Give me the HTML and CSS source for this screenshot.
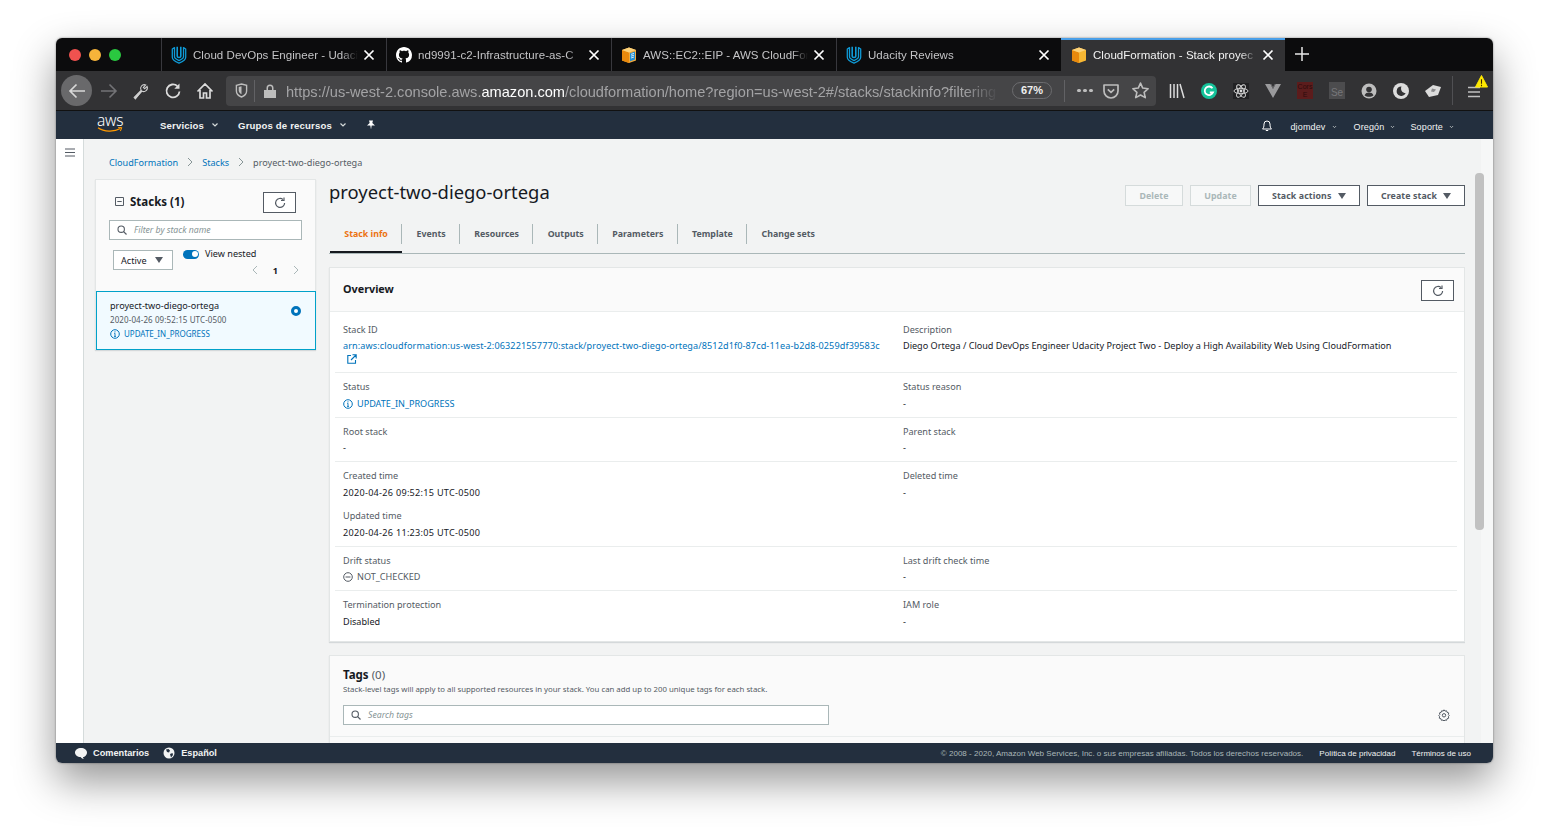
FILE: index.html
```html
<!DOCTYPE html>
<html lang="es">
<head>
<meta charset="utf-8">
<title>CloudFormation - Stack proyect-two-diego-ortega</title>
<link rel="stylesheet" href="styles.css">
</head>
<body>
<svg class="defs" aria-hidden="true">
  <symbol id="i-udacity" viewBox="0 0 16 18"><path d="M3.500 1.600 1.300 3v8.200c0 2.600 3.400 4.600 6.700 5.900 3.300-1.300 6.700-3.300 6.700-5.900V3l-2.200-1.400v9.200c0 1.600-2.400 2.900-4.500 3.800-2.100-.9-4.500-2.200-4.500-3.800z" fill="none" stroke="currentColor" stroke-width="1.300" stroke-linejoin="round"/><path d="M6.200.8v9.400c0 1.700 3.600 1.700 3.600 0V.8" fill="none" stroke="currentColor" stroke-width="1.600"/></symbol>
  <symbol id="i-github" viewBox="0 0 16 16"><path fill="currentColor" d="M8 0C3.58 0 0 3.58 0 8c0 3.54 2.29 6.53 5.47 7.59.4.07.55-.17.55-.38 0-.19-.01-.82-.01-1.49-2.01.37-2.53-.49-2.69-.94-.09-.23-.48-.94-.82-1.13-.28-.15-.68-.52-.01-.53.63-.01 1.08.58 1.23.82.72 1.21 1.87.87 2.33.66.07-.52.28-.87.51-1.07-1.78-.2-3.64-.89-3.64-3.95 0-.87.31-1.59.82-2.15-.08-.2-.36-1.02.08-2.12 0 0 .67-.21 2.2.82.64-.18 1.32-.27 2-.27.68 0 1.36.09 2 .27 1.53-1.04 2.2-.82 2.2-.82.44 1.1.16 1.92.08 2.12.51.56.82 1.27.82 2.15 0 3.07-1.87 3.75-3.65 3.95.29.25.54.73.54 1.48 0 1.07-.01 1.93-.01 2.2 0 .21.15.46.55.38A8.013 8.013 0 0016 8c0-4.42-3.58-8-8-8z"/></symbol>
  <symbol id="i-cube" viewBox="0 0 16 16"><path fill="#f7b733" d="M8 .5 15 3v10.400L8 16 1 13.400V3z"/><path fill="#e8890c" d="M1 3l7 2.500V16l-7-2.600z"/><path fill="#fcd27a" d="M8 .5 15 3 8 5.500 1 3z"/></symbol>
  <symbol id="i-cube-doc" viewBox="0 0 16 16"><path fill="#f2a93b" d="M8 .5 15 3v10.400L8 16 1 13.400V3z"/><path fill="#e8890c" d="M1 3l7 2.500V16l-7-2.600z"/><path fill="#fcd27a" d="M8 .5 15 3 8 5.500 1 3z"/><path fill="#1f8fd6" d="M9 6.200l5-1.800v8l-5 1.800z"/><path stroke="#fff" stroke-width=".8" d="M10 7.400l3-1M10 9.200l3-1M10 11l3-1"/></symbol>
  <symbol id="i-close" viewBox="0 0 12 12"><path d="M1.500 1.500l9 9m0-9l-9 9" stroke="currentColor" stroke-width="1.700" fill="none"/></symbol>
  <symbol id="i-refresh" viewBox="0 0 12 12"><path d="M10.600 6a4.500 4.500 0 1 1-1.500-3.400" fill="none" stroke="currentColor" stroke-width="1.200"/><path d="M10 .5v3H7" fill="none" stroke="currentColor" stroke-width="1.200"/></symbol>
  <symbol id="i-search" viewBox="0 0 10 10"><circle cx="4.200" cy="4.200" r="3.200" fill="none" stroke="currentColor" stroke-width="1.100"/><path d="M6.600 6.600 9.500 9.500" stroke="currentColor" stroke-width="1.200"/></symbol>
  <symbol id="i-info" viewBox="0 0 10 10"><circle cx="5" cy="5" r="4.300" fill="none" stroke="currentColor" stroke-width="1"/><path d="M5 4.300v3M4 7.400h2M4.100 4.300H5" stroke="currentColor" stroke-width=".9" fill="none"/><circle cx="5" cy="2.800" r=".6" fill="currentColor"/></symbol>
  <symbol id="i-caret" viewBox="0 0 8 6"><path d="M0 0h8L4 6z" fill="currentColor"/></symbol>
  <symbol id="i-chev" viewBox="0 0 8 6"><path d="M1.500 1.500 4 4l2.500-2.500" fill="none" stroke="currentColor" stroke-width="1.200"/></symbol>
</svg>

<div class="window">
  <header class="tabbar">
    <div class="traffic"><span class="dot dot-red"></span><span class="dot dot-yellow"></span><span class="dot dot-green"></span></div>
    <div class="tab">
      <svg class="tab-icon icon-udacity"><use href="#i-udacity"/></svg>
      <span class="tab-title">Cloud DevOps Engineer - Udaci</span>
      <svg class="tab-close"><use href="#i-close"/></svg>
    </div>
    <div class="tab">
      <svg class="tab-icon"><use href="#i-github"/></svg>
      <span class="tab-title">nd9991-c2-Infrastructure-as-C</span>
      <svg class="tab-close"><use href="#i-close"/></svg>
    </div>
    <div class="tab">
      <svg class="tab-icon"><use href="#i-cube-doc"/></svg>
      <span class="tab-title">AWS::EC2::EIP - AWS CloudFor</span>
      <svg class="tab-close"><use href="#i-close"/></svg>
    </div>
    <div class="tab">
      <svg class="tab-icon icon-udacity"><use href="#i-udacity"/></svg>
      <span class="tab-title">Udacity Reviews</span>
      <svg class="tab-close"><use href="#i-close"/></svg>
    </div>
    <div class="tab tab-active">
      <svg class="tab-icon"><use href="#i-cube"/></svg>
      <span class="tab-title">CloudFormation - Stack proyec</span>
      <svg class="tab-close"><use href="#i-close"/></svg>
    </div>
    <svg class="tab-new" viewBox="0 0 14 14"><path d="M7 0v14M0 7h14" stroke="currentColor" stroke-width="1.500"/></svg>
  </header>

  <div class="toolbar">
    <span class="back"><svg class="tool" viewBox="0 0 18 18"><path d="M17 9H2M8.500 2.500 2 9l6.500 6.500" fill="none" stroke="currentColor" stroke-width="1.700"/></svg></span>
    <svg class="tool tool-dim tool-fwd" viewBox="0 0 18 18"><path d="M1 9h15M9.500 2.500 16 9l-6.500 6.500" fill="none" stroke="currentColor" stroke-width="1.600"/></svg>
    <svg class="tool tool-wrench" viewBox="0 0 18 18"><path d="M2.200 15.500l6.900-7.200a3.700 3.700 0 0 1 4.600-5.300l-2.300 2.400 1.300 1.300 2.400-2.300a3.700 3.700 0 0 1-5.300 4.600L3.400 16.800z" fill="none" stroke="currentColor" stroke-width="1.100"/><path d="M2.200 15.500l6.900-7.200 1.200 1.200L3.400 16.800z" fill="currentColor"/></svg>
    <svg class="tool tool-reload" viewBox="0 0 18 18"><path d="M15.500 9.500A6.500 6.500 0 1 1 13.300 4" fill="none" stroke="currentColor" stroke-width="1.800"/><path d="M15.500 1.500v5.200h-5.200z" fill="currentColor"/></svg>
    <svg class="tool tool-home" viewBox="0 0 18 18"><path d="M1.500 9.500 9 2l7.500 7.500M4 8v8h3.500v-5h3v5H14V8" fill="none" stroke="currentColor" stroke-width="1.700"/></svg>
    <div class="urlbar">
      <svg class="url-shield" viewBox="0 0 14 16"><path d="M1.500 2.500 7 1l5.500 1.500v6C12.500 12 9.500 14 7 15c-2.500-1-5.500-3-5.500-6.500z" fill="none" stroke="currentColor" stroke-width="1.500"/><path d="M7 3.500v8.500C5 11 4 9.500 4 8V4.300z" fill="currentColor"/></svg>
      <span class="url-sep"></span>
      <svg class="url-lock" viewBox="0 0 12 14"><path d="M0 6h12v8H0zM2.500 6V4a3.500 3.500 0 0 1 7 0v2" fill="currentColor"/><path d="M4 6V4a2 2 0 0 1 4 0v2z" fill="#454547"/></svg>
      <span class="url-text">https://us-west-2.console.aws.<b>amazon.com</b>/cloudformation/home?region=us-west-2#/stacks/stackinfo?filtering</span>
      <span class="url-zoom">67%</span>
      <span class="url-sep url-sep-right"></span>
      <span class="url-dots"><i></i><i></i><i></i></span>
      <svg class="url-pocket" viewBox="0 0 16 16"><path d="M1 2h14v6a7 7 0 0 1-14 0z" fill="none" stroke="currentColor" stroke-width="1.700" stroke-linejoin="round"/><path d="M4.800 6.300 8 9.300l3.200-3" fill="none" stroke="currentColor" stroke-width="1.700"/></svg>
      <svg class="url-star" viewBox="0 0 16 16"><path d="M8 1l2.100 4.700 5.100.6-3.800 3.400 1.100 5L8 12.200l-4.500 2.500 1.100-5L.8 6.300l5.100-.6z" fill="none" stroke="currentColor" stroke-width="1.500" stroke-linejoin="round"/></svg>
    </div>
    <div class="extensions">
      <svg class="ext" viewBox="0 0 18 18"><path d="M2.500 2v14M6 2v14M9.500 2v14M12 2l4 14" stroke="currentColor" stroke-width="1.500" fill="none"/></svg>
      <svg class="ext" viewBox="0 0 18 18"><circle cx="9" cy="9" r="8" fill="#15c39a"/><path d="M12.500 6.200A4.300 4.300 0 1 0 13 10.500H9.800" fill="none" stroke="#fff" stroke-width="1.800"/></svg>
      <svg class="ext" viewBox="0 0 18 18"><rect x="1" y="1" width="16" height="16" fill="#222224"/><g fill="none" stroke="currentColor" stroke-width=".9"><ellipse cx="9" cy="9" rx="7" ry="2.700"/><ellipse cx="9" cy="9" rx="7" ry="2.700" transform="rotate(60 9 9)"/><ellipse cx="9" cy="9" rx="7" ry="2.700" transform="rotate(120 9 9)"/></g><circle cx="9" cy="9" r="1.400" fill="currentColor"/></svg>
      <svg class="ext ext-v" viewBox="0 0 18 18"><path d="M1 2h5.500L9 7l2.500-5H17L9 16z" fill="currentColor"/><path d="M6.800 2 9 6l2.200-4" fill="none" stroke="#6e6e70" stroke-width="1"/></svg>
      <span class="ext ext-cors">Cors<br>E</span>
      <span class="ext ext-se">Se</span>
      <svg class="ext ext-gray" viewBox="0 0 18 18"><circle cx="9" cy="9" r="7.500" fill="currentColor"/><circle cx="9" cy="7.500" r="2.800" fill="#323234"/><path d="M4.500 13.200c1-2 2.500-2.700 4.500-2.700s3.500.7 4.500 2.700c-2.500 2-6.500 2-9 0z" fill="#323234"/></svg>
      <svg class="ext" viewBox="0 0 18 18"><circle cx="9" cy="9" r="8" fill="currentColor"/><path d="M9.500 4.500a4.700 4.700 0 1 0 4.200 6.500A4.500 4.500 0 0 1 9.500 4.500z" fill="#323234"/></svg>
      <svg class="ext" viewBox="0 0 18 18"><path d="M1 9l8-6 8 2-3 8-9 2z" fill="currentColor"/><path d="M8 6.500l4 1-2 2.500-3-.5z" fill="#8a8a8c"/></svg>
    </div>
    <span class="tool-sep"></span>
    <div class="menu-btn">
      <svg class="menu-lines" viewBox="0 0 12 12"><path d="M0 1.500h12M0 6h12M0 10.500h12" stroke="currentColor" stroke-width="1.400"/></svg>
      <svg class="menu-warn" viewBox="0 0 14 14"><path d="M7 .5 13.500 13H.5z" fill="#ffe900" stroke="#ffe900" stroke-linejoin="round"/><path d="M7 4.500v5M7 10.500v1.500" stroke="#3e2800" stroke-width="1.200"/></svg>
    </div>
  </div>

  <nav class="awsnav">
    <div class="aws-logo">
      <span class="aws-word">aws</span>
      <svg class="aws-smile" viewBox="0 0 26 6"><path d="M1 .8c6 4.200 16 4.400 22.500.8" fill="none" stroke="#f90" stroke-width="1.200"/><path d="M21 .3l3.800.3-1.400 3.500" fill="none" stroke="#f90" stroke-width="1"/></svg>
    </div>
    <a class="nav-item nav-strong nav-services">Servicios<svg class="chev"><use href="#i-chev"/></svg></a>
    <a class="nav-item nav-strong nav-groups">Grupos de recursos<svg class="chev"><use href="#i-chev"/></svg></a>
    <svg class="nav-pin" viewBox="0 0 10 10"><path d="M3 .5h4L6.300 3 9 5.500H5.700L5 9.500 4.300 5.500H1L3.700 3z" fill="currentColor"/></svg>
    <span class="nav-spacer"></span>
    <svg class="nav-bell" viewBox="0 0 12 12"><path d="M6 1a3 3 0 0 1 3 3c0 3 .5 4 1.500 5h-9C2.500 8 3 7 3 4a3 3 0 0 1 3-3zM4.800 10.500h2.400" fill="none" stroke="currentColor" stroke-width="1"/></svg>
    <a class="nav-item nav-right nav-user">djomdev<svg class="chev"><use href="#i-chev"/></svg></a>
    <a class="nav-item nav-right nav-region">Oregón<svg class="chev"><use href="#i-chev"/></svg></a>
    <a class="nav-item nav-right nav-support">Soporte<svg class="chev"><use href="#i-chev"/></svg></a>
  </nav>

  <div class="page">
    <aside class="sidebar">
      <svg class="side-menu" viewBox="0 0 10 9"><path d="M0 1h10M0 4.500h10M0 8h10" stroke="currentColor" stroke-width="1.100"/></svg>
    </aside>
    <main class="content">
      <div class="crumbs">
        <a class="link">CloudFormation</a>
        <svg class="crumb-sep" viewBox="0 0 6 10"><path d="M1 1l4 4-4 4" fill="none" stroke="currentColor"/></svg>
        <a class="link">Stacks</a>
        <svg class="crumb-sep" viewBox="0 0 6 10"><path d="M1 1l4 4-4 4" fill="none" stroke="currentColor"/></svg>
        <span class="crumb-current">proyect-two-diego-ortega</span>
      </div>
      <div class="columns">
        <section class="stacks">
          <div class="stacks-head">
            <div class="stacks-title">
              <svg class="collapse" viewBox="0 0 9 9"><path d="M.5.500h8v8h-8zM2.300 4.500h4.400" fill="none" stroke="currentColor"/></svg>
              <h2>Stacks (1)</h2>
            </div>
            <button class="icon-btn"><svg><use href="#i-refresh"/></svg></button>
          </div>
          <div class="input input-filter">
            <svg class="search-icon"><use href="#i-search"/></svg>
            <span class="placeholder">Filter by stack name</span>
          </div>
          <div class="stacks-controls">
            <div class="select">Active<svg class="caret"><use href="#i-caret"/></svg></div>
            <div class="nested">
              <div class="nested-toggle"><span class="toggle"></span><span>View nested</span></div>
              <div class="pager">
                <svg viewBox="0 0 6 10"><path d="M5 1 1 5l4 4" fill="none" stroke="currentColor"/></svg>
                <b>1</b>
                <svg viewBox="0 0 6 10"><path d="M1 1l4 4-4 4" fill="none" stroke="currentColor"/></svg>
              </div>
            </div>
          </div>
          <div class="stack-item">
            <div class="stack-text">
              <div class="stack-name">proyect-two-diego-ortega</div>
              <div class="stack-date">2020-04-26 09:52:15 UTC-0500</div>
              <div class="status status-small"><svg><use href="#i-info"/></svg>UPDATE_IN_PROGRESS</div>
            </div>
            <span class="radio"></span>
          </div>
        </section>

        <section class="detail">
          <div class="detail-head">
            <h1>proyect-two-diego-ortega</h1>
            <div class="actions">
              <button class="btn btn-disabled btn-delete">Delete</button>
              <button class="btn btn-disabled btn-update">Update</button>
              <button class="btn btn-stack">Stack actions<svg class="caret"><use href="#i-caret"/></svg></button>
              <button class="btn btn-create">Create stack<svg class="caret"><use href="#i-caret"/></svg></button>
            </div>
          </div>
          <div class="tabs">
            <a class="dtab dtab-active">Stack info</a>
            <a class="dtab">Events</a>
            <a class="dtab">Resources</a>
            <a class="dtab">Outputs</a>
            <a class="dtab">Parameters</a>
            <a class="dtab">Template</a>
            <a class="dtab">Change sets</a>
          </div>

          <article class="panel overview">
            <div class="panel-head">
              <h3>Overview</h3>
              <button class="icon-btn"><svg><use href="#i-refresh"/></svg></button>
            </div>
            <div class="panel-body">
              <div class="row row-first">
                <div class="field">
                  <div class="label">Stack ID</div>
                  <div class="value value-arn"><a class="link arn">arn:aws:cloudformation:us-west-2:063221557770:stack/proyect-two-diego-ortega/8512d1f0-87cd-11ea-b2d8-0259df39583c</a>
                    <svg class="ext-link" viewBox="0 0 10 10"><path d="M4 1.500H.8v7.700h7.700V6M5.500.8h3.700v3.700M9 1 4 6" fill="none" stroke="currentColor" stroke-width="1.100"/></svg></div>
                </div>
                <div class="field">
                  <div class="label">Description</div>
                  <div class="value value-arn">Diego Ortega / Cloud DevOps Engineer Udacity Project Two - Deploy a High Availability Web Using CloudFormation</div>
                </div>
              </div>
              <div class="row">
                <div class="field"><div class="label">Status</div><div class="value status"><svg><use href="#i-info"/></svg>UPDATE_IN_PROGRESS</div></div>
                <div class="field"><div class="label">Status reason</div><div class="value">-</div></div>
              </div>
              <div class="row">
                <div class="field"><div class="label">Root stack</div><div class="value">-</div></div>
                <div class="field"><div class="label">Parent stack</div><div class="value">-</div></div>
              </div>
              <div class="row">
                <div class="stack-fields">
                  <div class="field"><div class="label">Created time</div><div class="value date">2020-04-26 09:52:15 UTC-0500</div></div>
                  <div class="field"><div class="label">Updated time</div><div class="value date">2020-04-26 11:23:05 UTC-0500</div></div>
                </div>
                <div class="field"><div class="label">Deleted time</div><div class="value">-</div></div>
              </div>
              <div class="row">
                <div class="field"><div class="label">Drift status</div><div class="value drift"><svg viewBox="0 0 10 10"><circle cx="5" cy="5" r="4.300" fill="none" stroke="currentColor"/><path d="M2.500 5h5" stroke="currentColor"/></svg>NOT_CHECKED</div></div>
                <div class="field"><div class="label">Last drift check time</div><div class="value">-</div></div>
              </div>
              <div class="row row-last">
                <div class="field"><div class="label">Termination protection</div><div class="value">Disabled</div></div>
                <div class="field"><div class="label">IAM role</div><div class="value">-</div></div>
              </div>
            </div>
          </article>

          <article class="panel tags">
            <h3 class="tags-title">Tags <span class="count">(0)</span></h3>
            <p class="tags-desc">Stack-level tags will apply to all supported resources in your stack. You can add up to 200 unique tags for each stack.</p>
            <div class="tags-tools">
              <div class="input input-tags">
                <svg class="search-icon"><use href="#i-search"/></svg>
                <span class="placeholder">Search tags</span>
              </div>
              <svg class="gear" viewBox="0 0 12 12"><path d="M6 .8l1 1.300 1.600-.3.500 1.600 1.600.5-.3 1.600L11.200 6.500l-.8 1.200.3 1.500-1.600.5-.5 1.600-1.600-.3-1 1-1-1-1.600.3-.5-1.600-1.600-.5.300-1.500L.8 6.500l1-1-.3-1.600 1.600-.5.500-1.600 1.600.3z" fill="none" stroke="currentColor"/><circle cx="6" cy="6.300" r="1.700" fill="none" stroke="currentColor"/></svg>
            </div>
            <div class="tags-rule"></div>
          </article>
        </section>
      </div>
      <div class="scrollbar"><span class="scroll-thumb"></span></div>
    </main>
  </div>

  <footer class="footer">
    <svg class="foot-icon foot-bubble" viewBox="0 0 12 11"><path d="M6 0c3.300 0 6 1.900 6 4.500S9.800 9 8 9c0 .7.300 1.400.8 2-1.500-.2-2.600-1-3.200-2C2.500 9 0 7.100 0 4.500S2.700 0 6 0z" fill="currentColor"/></svg>
    <a class="foot-strong">Comentarios</a>
    <svg class="foot-icon foot-globe" viewBox="0 0 12 12"><circle cx="6" cy="6" r="5.500" fill="currentColor"/><path d="M3 2.500l2.500-.5 1.500 1.500-1 2-2-.5zM7 7l2.500-1 .5 2-2 2.500z" fill="#232f3e"/></svg>
    <a class="foot-strong">Español</a>
    <span class="nav-spacer"></span>
    <span class="copyright">© 2008 - 2020, Amazon Web Services, Inc. o sus empresas afiliadas. Todos los derechos reservados.</span>
    <a class="foot-link">Política de privacidad</a>
    <a class="foot-link">Términos de uso</a>
  </footer>
</div>
</body>
</html>
```
FILE: styles.css
```css
* { box-sizing: border-box; }
html, body { margin: 0; height: 100%; }
body {
  background: #fff;
  padding: 38px 56px 0;
  overflow: hidden;
  font-family: "Noto Sans", "Liberation Sans", sans-serif;
  font-size: 9.100px;
  color: #16191f;
}
.defs { display: none; }
h1, h2, h3, p { margin: 0; font-weight: inherit; font-size: inherit; }
button { font: inherit; padding: 0; margin: 0; cursor: pointer; }

.window {
  width: 1437px;
  height: 725px;
  display: flex;
  flex-direction: column;
  border-radius: 6px;
  overflow: hidden;
  box-shadow: 0 18px 42px rgba(0, 0, 0, .42), 0 0 2px rgba(0, 0, 0, .5);
}

/* Browser tabs */
.tabbar {
  height: 33px;
  flex: none;
  display: flex;
  background: #0c0c0d;
  color: #e8e8e8;
  font-family: "Liberation Sans", sans-serif;
  font-size: 11.500px;
  letter-spacing: .05px;
}
.traffic {
  width: 105px;
  display: flex;
  align-items: center;
  gap: 8px;
  padding-left: 13px;
}
.dot { width: 12px; height: 12px; border-radius: 50%; }
.dot-red { background: #f0524f; }
.dot-yellow { background: #f6b43a; }
.dot-green { background: #2ac840; }
.tab {
  width: 225px;
  display: flex;
  align-items: center;
  padding: 0 11px 0 9px;
  border-left: 1px solid #38383d;
  color: #c4c4c6;
}
.tab-active {
  background: #323234;
  border-left: 0;
  border-top: 2px solid #4a9fe8;
  color: #f2f2f2;
  width: 224px;
  padding-bottom: 2px;
  padding-left: 10px;
}
.tab-icon { width: 16px; height: 18px; flex: none; margin-right: 6px; color: #fff; }
.icon-udacity { color: #0f9ad6; }
.tab-title {
  flex: 1;
  min-width: 0;
  white-space: nowrap;
  overflow: hidden;
  -webkit-mask-image: linear-gradient(to right, #000 90%, transparent 100%);
  mask-image: linear-gradient(to right, #000 90%, transparent 100%);
}
.tab-close { width: 12px; height: 12px; flex: none; margin-left: 5px; color: #fff; }
.tab-new { width: 14px; height: 14px; margin: 9px 0 0 10px; color: #e8e8e8; }

/* Browser toolbar */
.toolbar {
  height: 40px;
  flex: none;
  display: flex;
  align-items: center;
  background: #323234;
  color: #dcdcdc;
  border-bottom: 1px solid #111;
  padding-left: 5px;
}
.back {
  width: 31px;
  height: 31px;
  flex: none;
  border-radius: 50%;
  background: #69696b;
  color: #d8d8d8;
  display: flex;
  align-items: center;
  justify-content: center;
}
.tool { width: 18px; height: 18px; flex: none; }
.tool-dim { color: #737376; }
.tool-fwd { margin-left: 8px; }
.tool-wrench { margin-left: 14px; color: #cfcfcf; }
.tool-reload { margin-left: 14px; }
.tool-home { margin-left: 14px; }
.urlbar {
  width: 930px;
  height: 30px;
  flex: none;
  margin-left: 12px;
  display: flex;
  align-items: center;
  background: #454547;
  border-radius: 4px;
  padding-left: 9px;
  color: #bdbdbd;
}
.url-shield { width: 13px; height: 15px; flex: none; }
.url-sep { width: 1px; height: 22px; flex: none; background: #626265; margin-left: 6px; }
.url-lock { width: 12px; height: 14px; flex: none; margin-left: 9px; }
.url-text {
  width: 713px;
  flex: none;
  margin-left: 10px;
  padding-top: 2px;
  font-family: "Liberation Sans", sans-serif;
  font-size: 14.600px;
  color: #a3a3a5;
  white-space: nowrap;
  overflow: hidden;
  -webkit-mask-image: linear-gradient(to right, #000 95%, transparent 100%);
  mask-image: linear-gradient(to right, #000 95%, transparent 100%);
}
.url-text b { font-weight: 400; color: #fff; }
.url-zoom {
  width: 40px;
  height: 17px;
  flex: none;
  margin-left: 13px;
  border: 1px solid #6c6c6f;
  border-radius: 9px;
  color: #f0f0f0;
  font: 700 11px/15px "Liberation Sans", sans-serif;
  text-align: center;
}
.url-sep-right { margin-left: 12px; }
.url-dots { display: flex; gap: 2.500px; margin-left: 12px; flex: none; }
.url-dots i { display: block; width: 3.500px; height: 3.500px; border-radius: 50%; background: #bdbdbd; }
.url-pocket { width: 16px; height: 16px; flex: none; margin-left: 10px; }
.url-star { width: 17px; height: 17px; flex: none; margin-left: 13px; }
.extensions {
  display: flex;
  align-items: center;
  gap: 14px;
  margin-left: 12px;
  color: #dcdcdc;
}
.ext { width: 18px; height: 18px; flex: none; }
.ext-v { color: #9a9a9c; }
.ext-gray { color: #bdbdbd; }
.ext-cors {
  width: 16px;
  height: 17px;
  margin: 0 1px;
  background: #5c1c1c;
  color: #2c0c0c;
  font: 7px/8px "Liberation Sans", sans-serif;
  text-align: center;
  padding-top: 1px;
}
.ext-se {
  width: 16px;
  height: 17px;
  margin: 0 1px;
  background: #4c4c4e;
  color: #77777a;
  font: 10px/22px "Liberation Sans", sans-serif;
  text-align: center;
  overflow: hidden;
}
.tool-sep { width: 1px; height: 29px; flex: none; background: #505053; margin-left: 10px; }
.menu-btn { position: relative; margin-left: 15px; display: flex; padding-top: 3px; color: #c0c0c0; }
.menu-lines { width: 12px; height: 12px; flex: none; }
.menu-warn { position: absolute; top: -8px; left: 7px; width: 13px; height: 13px; }

/* AWS navigation */
.awsnav {
  height: 28px;
  flex: none;
  display: flex;
  align-items: center;
  background: #232f3e;
  color: #fff;
  font-family: "Liberation Sans", sans-serif;
  font-size: 9px;
}
.aws-logo { position: relative; width: 26px; height: 22px; margin-left: 41px; flex: none; margin-top: -3px; }
.aws-word { display: block; font: 300 15.500px/15px "Noto Sans", sans-serif; letter-spacing: -.2px; text-align: center; }
.aws-smile { position: absolute; left: 0; top: 14px; width: 26px; height: 6px; }
.nav-item { display: flex; align-items: center; white-space: nowrap; color: #f2f3f3; }
.nav-strong { font-weight: 700; font-size: 9.600px; letter-spacing: .15px; }
.chev { width: 8px; height: 6px; margin-left: 7px; flex: none; color: #d5dbdb; }
.nav-services { margin-left: 37px; }
.nav-groups { margin-left: 19px; }
.nav-pin { width: 10px; height: 10px; flex: none; margin-left: 19px; }
.nav-spacer { flex: 1; }
.nav-bell { width: 12px; height: 12px; flex: none; margin: 2px 17px 0 0; }
.nav-right { margin-top: 3px; letter-spacing: .15px; }
.nav-right .chev { width: 5px; height: 4px; margin-left: 6px; }
.nav-user { margin-right: 17px; }
.nav-region { margin-right: 15px; }
.nav-support { margin-right: 39px; }

/* Page */
.page { flex: 1; min-height: 0; display: flex; background: #f2f3f3; }
.sidebar {
  width: 28px;
  flex: none;
  background: #fff;
  border-right: 1px solid #d5dbdb;
  padding: 9px 0 0 9px;
}
.side-menu { display: block; width: 10px; height: 9px; color: #545b64; }
.content { position: relative; flex: 1; min-width: 0; overflow: hidden; padding: 16px 0 0 11px; }
.crumbs {
  height: 24px;
  padding-left: 14px;
  display: flex;
  align-items: flex-start;
  line-height: 16px;
  color: #545b64;
}
.crumb-sep { width: 6px; height: 10px; margin: 2px 9px 0 9px; color: #879596; flex: none; }
.link { color: #0073bb; }
.columns { display: grid; grid-template-columns: 221px 1136px; column-gap: 13px; align-items: start; }

/* Stack list */
.stacks {
  background: #fafafa;
  border: 1px solid #e3e6e6;
  box-shadow: 0 1px 1px rgba(0, 22, 43, .12);
  height: 171px;
  display: flex;
  flex-direction: column;
}
.stacks-head { display: flex; justify-content: space-between; align-items: center; padding: 12px 19px 0 19px; }
.stacks-title { display: flex; align-items: center; gap: 6px; margin-top: -2px; }
.collapse { width: 9px; height: 9px; flex: none; color: #545b64; }
.stacks-title h2 { font-size: 11.500px; font-weight: 700; color: #16191f; }
.count { font-weight: 400; color: #545b64; }
.icon-btn {
  width: 33px;
  height: 21px;
  flex: none;
  background: #fff;
  border: 1px solid #545b64;
  display: flex;
  align-items: center;
  justify-content: center;
  color: #545b64;
}
.icon-btn svg { width: 12px; height: 12px; }
.input {
  height: 20px;
  display: flex;
  align-items: center;
  background: #fff;
  border: 1px solid #aab7b8;
  padding-left: 7px;
  color: #545b64;
}
.search-icon { width: 10px; height: 10px; flex: none; margin-right: 7px; }
.placeholder { font-style: italic; color: #879596; font-size: 8.700px; }
.input-filter { margin: 7px 13px 0; }
.stacks-controls { display: flex; padding: 9px 0 0 17px; }
.select {
  width: 60px;
  height: 20px;
  margin-top: 1px;
  background: #fff;
  border: 1px solid #aab7b8;
  display: flex;
  align-items: center;
  justify-content: space-between;
  padding: 0 9px 0 7px;
  color: #16191f;
}
.caret { width: 8px; height: 6px; flex: none; color: #545b64; }
.nested { margin-left: 10px; }
.nested-toggle { display: flex; align-items: center; gap: 6px; height: 10px; line-height: 10px; color: #16191f; }
.toggle { position: relative; width: 16px; height: 9px; border-radius: 5px; background: #0073bb; display: block; flex: none; }
.toggle::after { content: ""; position: absolute; top: 1.500px; right: 1.500px; width: 6px; height: 6px; border-radius: 50%; background: #fff; }
.pager { display: flex; align-items: center; justify-content: flex-end; gap: 15px; width: 116px; height: 14px; margin-top: 4px; color: #aab7b8; }
.pager svg { width: 6px; height: 10px; }
.pager b { color: #16191f; }
.stack-item {
  margin: 14px -1px -1px 0;
  flex: 1;
  display: flex;
  justify-content: space-between;
  background: #f1faff;
  border: 1px solid #00a1c9;
  padding: 7px 14px 0 13px;
}
.stack-name { line-height: 14px; color: #16191f; }
.stack-date { line-height: 14px; font-size: 8px; color: #545b64; letter-spacing: .1px; }
.status { display: flex; align-items: center; color: #0073bb; }
.status svg { width: 10px; height: 10px; flex: none; margin-right: 4px; }
.status-small { line-height: 14px; font-size: 8px; }
.radio { width: 10px; height: 10px; margin-top: 7px; border-radius: 50%; border: 3px solid #0073bb; background: #fff; flex: none; }

/* Detail */
.detail-head { display: flex; justify-content: space-between; height: 44px; }
.detail-head h1 { font-size: 18.400px; line-height: 28px; margin-top: -1px; color: #16191f; }
.actions { display: flex; gap: 7px; padding-top: 6px; }
.btn {
  height: 21px;
  background: #fff;
  border: 1px solid #545b64;
  color: #545b64;
  font-weight: 700;
  font-size: 8.800px;
  display: flex;
  align-items: center;
  justify-content: space-between;
  padding: 0 13px;
  letter-spacing: .1px;
}
.btn-disabled { background: #f7f8f8; border-color: #d5dbdb; color: #aab7b8; justify-content: center; padding: 0; }
.btn-delete { width: 58px; }
.btn-update { width: 61px; }
.btn-stack { width: 102px; }
.btn-create { width: 98px; }
.tabs {
  display: flex;
  height: 31px;
  border-bottom: 1px solid #aab7b8;
  padding-left: 1px;
}
.dtab {
  position: relative;
  height: 30px;
  display: flex;
  align-items: center;
  padding: 0 14.350px 8px 14.350px;
  font-weight: 700;
  font-size: 8.800px;
  color: #545b64;
}
.dtab::after {
  content: "";
  position: absolute;
  right: 0;
  top: 1px;
  width: 1px;
  height: 20px;
  background: #aab7b8;
}
.dtab:last-child::after { display: none; }
.dtab-active { color: #ec7211; border-bottom: 2px solid #16191f; padding-bottom: 6px; }

/* Panels */
.panel { background: #fff; border: 1px solid #e3e6e6; box-shadow: 0 1px 1px rgba(0, 22, 43, .12); }
.overview { margin-top: 13px; }
.panel-head {
  height: 44px;
  display: flex;
  align-items: center;
  justify-content: space-between;
  padding: 0 10px 0 13px;
  background: #fafafa;
  border-bottom: 1px solid #eaeded;
}
.panel-head h3 { font-size: 10.800px; font-weight: 700; color: #16191f; margin-top: -2px; }
.panel-head .icon-btn { margin-top: 2px; }
.panel-body { padding: 0 7px 0 5px; }
.row {
  display: grid;
  grid-template-columns: 560px 1fr;
  padding: 6px 8px 5px;
  border-bottom: 1px solid #eaeded;
}
.row-first { padding-top: 10px; padding-bottom: 8.500px; }
.row-last { border-bottom: 0; padding-bottom: 11px; }
.field { min-width: 0; }
.label { line-height: 16px; color: #545b64; }
.value { line-height: 16px; margin-top: .67px; color: #16191f; }
.value-arn { margin-top: -.5px; }
.date { letter-spacing: .28px; }
.arn { display: block; white-space: nowrap; overflow: hidden; width: 540px; letter-spacing: .105px; }
.ext-link { display: block; width: 10px; height: 10px; margin: 0 0 0 4px; color: #0073bb; }
.value.status { color: #0073bb; }
.drift { display: flex; align-items: center; color: #545b64; }
.drift svg { width: 10px; height: 10px; flex: none; margin-right: 4px; }
.stack-fields { display: flex; flex-direction: column; gap: 7px; }

/* Tags */
.tags { margin-top: 13px; height: 120px; background: #fafafa; padding: 10px 0 0 13px; }
.tags-title { font-size: 11.500px; font-weight: 700; line-height: 17px; color: #16191f; }
.tags-desc { font-size: 7.800px; line-height: 11px; margin-top: 1px; color: #545b64; }
.tags-tools { display: flex; justify-content: space-between; align-items: center; margin-top: 10px; padding-right: 14px; }
.input-tags { width: 486px; }
.gear { width: 12px; height: 12px; color: #545b64; flex: none; }
.tags-rule { height: 1px; margin: 11px 0 0 -13px; background: #eaeded; }

/* Scrollbar */
.scrollbar {
  position: absolute;
  top: 0;
  right: 0;
  bottom: 0;
  width: 28px;
  padding: 34px 9px 0 10px;
  background: linear-gradient(to right, #f2f3f3 0 16px, #f6f7f7 16px);
}
.scroll-thumb { display: block; height: 357px; border-radius: 4px; background: #c1c1c1; }

/* Footer */
.footer {
  height: 20px;
  flex: none;
  display: flex;
  align-items: center;
  background: #232f3e;
  color: #f2f3f3;
  font-family: "Liberation Sans", sans-serif;
  font-size: 8.700px;
  padding: 0 22px 0 19px;
}
.foot-icon { flex: none; color: #f2f3f3; }
.foot-bubble { width: 12px; height: 11px; margin-right: 6px; }
.foot-globe { width: 12px; height: 12px; margin: 0 6px 0 14px; }
.foot-strong { font-weight: 700; font-size: 9.200px; }
.copyright { color: #aab7b8; font-size: 8.050px; }
.foot-link { margin-left: 16px; font-size: 8px; }
```
